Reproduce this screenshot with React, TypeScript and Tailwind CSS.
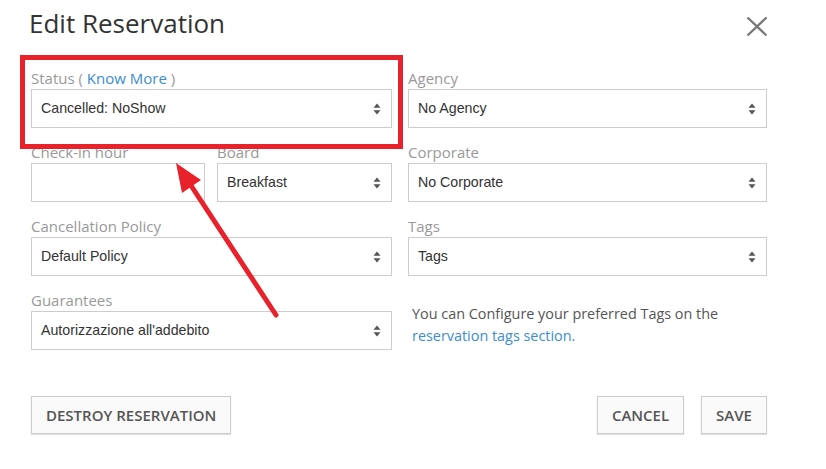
// Small up/down caret shown at the right of every select box
function Carets() {
  return (
    <svg width="8" height="12" viewBox="0 0 8 12" className="shrink-0">
      <path d="M4 0.5 L7.5 4.8 L0.5 4.8 Z" fill="#555" />
      <path d="M4 11.5 L7.5 7.2 L0.5 7.2 Z" fill="#555" />
    </svg>
  );
}

function SelectBox({ value }: { value: string }) {
  return (
    <div className="h-[39px] flex items-center justify-between border border-[#cccccc] bg-white pl-[9px] pr-[10px] font-['Liberation_Sans',Arial,sans-serif] text-[14.2px] text-[#333]">
      <span>{value}</span>
      <Carets />
    </div>
  );
}

function Label({ children }: { children: React.ReactNode }) {
  return (
    <div className="h-5 leading-5 mb-px text-[15px] text-[#999] whitespace-nowrap">
      {children}
    </div>
  );
}

function Field({ label, value }: { label: React.ReactNode; value: string }) {
  return (
    <div>
      <Label>{label}</Label>
      <SelectBox value={value} />
    </div>
  );
}

function Button({ children }: { children: React.ReactNode }) {
  return (
    <button className="h-[38px] px-[14px] border border-[#cccccc] bg-[#fafafa] shadow-[0_1px_1px_rgba(0,0,0,0.12)] text-[15px] font-semibold text-[#555] uppercase">
      {children}
    </button>
  );
}

export default function App() {
  return (
    <div className="relative w-[826px] h-[469px] overflow-hidden bg-white pl-[31px] font-['Open_Sans',sans-serif]">
      {/* ── Header ─────────────────────────────── */}
      <div className="w-[736px] h-[41px] flex items-start justify-between pt-[5px]">
        <h1 className="text-[26px] leading-9 text-[#333] -ml-[2px]">Edit Reservation</h1>
        {/* close button */}
        <svg width="22" height="21" viewBox="0 0 22 21" className="mt-[11px] -mr-px">
          <path d="M1.5 1.5 L20.5 19.5 M20.5 1.5 L1.5 19.5" stroke="#777" strokeWidth="2.3" />
        </svg>
      </div>

      {/* ── Form ───────────────────────────────── */}
      <div className="w-[736px] mt-[27px] grid grid-cols-[361px_359px] gap-x-4 gap-y-[14px]">
        <Field
          label={
            <>
              Status ( <span className="text-[#3a8dcf]">Know More</span> )
            </>
          }
          value="Cancelled: NoShow"
        />
        <Field label="Agency" value="No Agency" />

        <div className="grid grid-cols-[174px_175px] gap-x-3">
          <div>
            <Label>Check-in hour</Label>
            <div className="h-[39px] border border-[#cccccc] bg-white" />
          </div>
          <Field label="Board" value="Breakfast" />
        </div>
        <Field label="Corporate" value="No Corporate" />

        <Field label="Cancellation Policy" value="Default Policy" />
        <Field label="Tags" value="Tags" />

        <Field label="Guarantees" value="Autorizzazione all'addebito" />
        <div className="pt-[13px] pl-1 text-[14.4px] leading-[22px] text-[#555]">
          You can Configure your preferred Tags on the
          <br />
          <span className="text-[#3a8dcf]">reservation tags section.</span>
        </div>
      </div>

      {/* ── Footer buttons ─────────────────────── */}
      <div className="w-[736px] mt-[46px] flex items-center">
        <Button>Destroy Reservation</Button>
        <div className="flex-1" />
        <div className="flex gap-[17px]">
          <Button>Cancel</Button>
          <Button>Save</Button>
        </div>
      </div>

      {/* ── Red annotation overlay ─────────────── */}
      <div className="absolute left-[20px] top-[55px] w-[383px] h-[94px] border-[5px] border-[#e8212b] pointer-events-none" />
      <svg className="absolute left-0 top-0 pointer-events-none" width="826" height="469">
        <line x1="276" y1="315" x2="190" y2="184" stroke="#e8212b" strokeWidth="5" strokeLinecap="round" />
        <polygon points="176,163 201,180 182,193" fill="#e8212b" />
      </svg>
    </div>
  );
}
